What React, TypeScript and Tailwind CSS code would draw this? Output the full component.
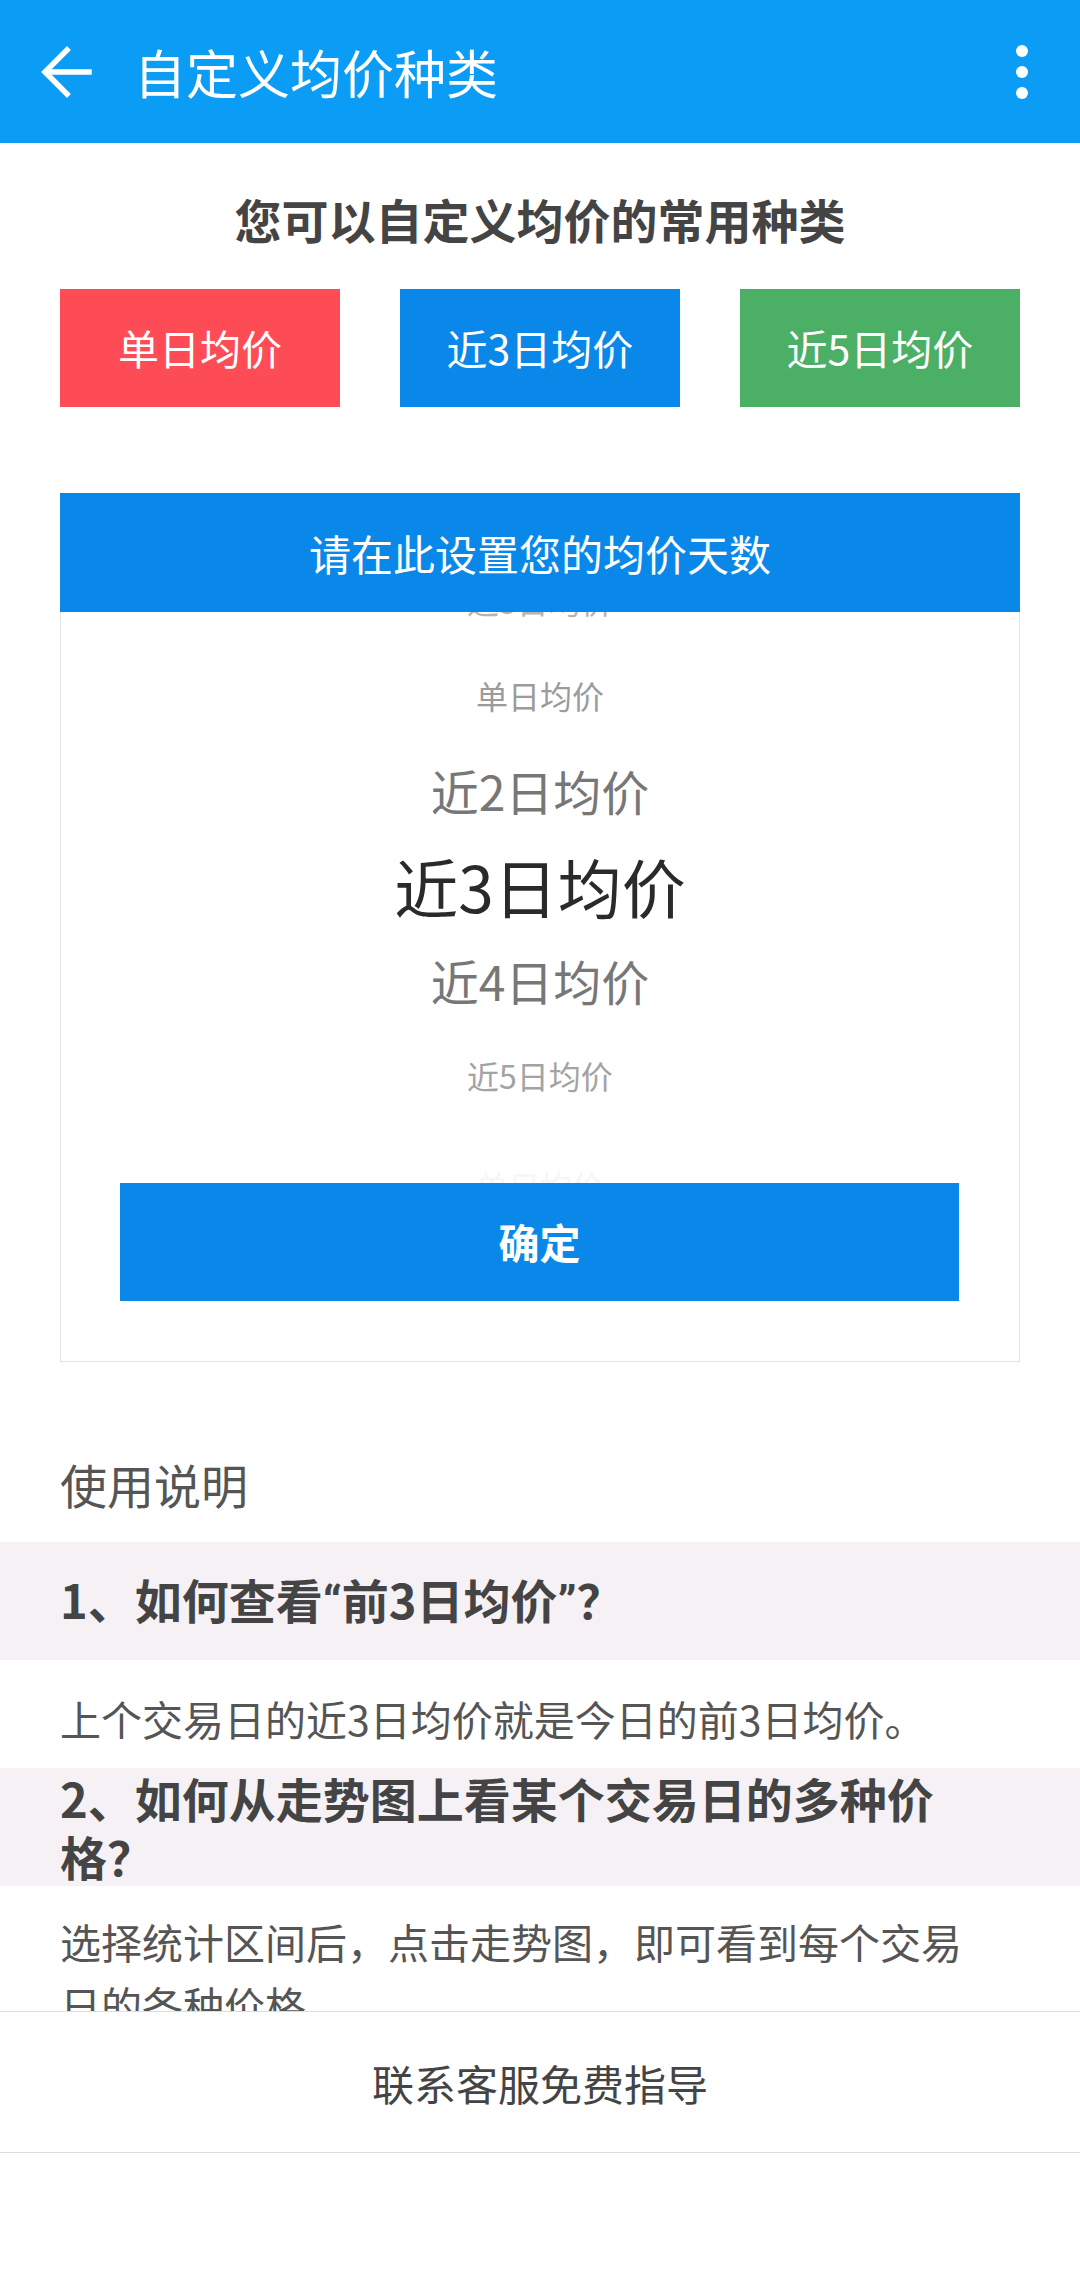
import React from 'react'

const kinds = [
  { label: '单日均价', bg: 'bg-[#fd4c55]' },
  { label: '近3日均价', bg: 'bg-[#0a88ea]' },
  { label: '近5日均价', bg: 'bg-[#4caf66]' },
]

const wheel = [
  { text: '近5日均价', cls: 'text-[32px] text-[#b5b5b5]' },
  { text: '单日均价', cls: 'text-[32px] text-[#9b9b9b]' },
  { text: '近2日均价', cls: 'text-[48px] text-[#777777]' },
  { text: '近3日均价', cls: 'text-[64px] text-[#2a2a2a]' },
  { text: '近4日均价', cls: 'text-[48px] text-[#777777]' },
  { text: '近5日均价', cls: 'text-[32px] text-[#a3a3a3]' },
  { text: '单日均价', cls: 'text-[32px] text-[#f6f6f6] pt-[30px]' },
]

function BackArrow() {
  return (
    <svg width="52" height="52" viewBox="0 0 52 52" fill="none">
      <path d="M49 26H6M27 4L5 26L27 48" stroke="white" strokeWidth="5.5" strokeLinecap="square" />
    </svg>
  )
}

export default function App() {
  return (
    <div className="flex h-[2285px] w-[1080px] flex-col bg-white font-['Noto_Sans_CJK_SC','Noto_Sans',sans-serif]">
      {/* toolbar */}
      <header className="flex h-[143px] shrink-0 items-center bg-[#0b9cf5] pl-[40px] pr-[52px]">
        <BackArrow />
        <h1 className="ml-[42px] text-[52px] leading-none text-white">自定义均价种类</h1>
        <div className="ml-auto flex flex-col gap-[9px]">
          <span className="h-[12px] w-[12px] rounded-full bg-white" />
          <span className="h-[12px] w-[12px] rounded-full bg-white" />
          <span className="h-[12px] w-[12px] rounded-full bg-white" />
        </div>
      </header>

      <main className="h-[1868px] shrink-0 overflow-hidden">
        <h2 className="pt-[40px] text-center text-[47px] font-bold leading-[72px] text-[#444444]">
          您可以自定义均价的常用种类
        </h2>

        <div className="mt-[34px] flex justify-between px-[60px]">
          {kinds.map((k) => (
            <div
              key={k.label}
              className={`${k.bg} flex h-[118px] w-[280px] items-center justify-center text-[41px] text-white`}
            >
              {k.label}
            </div>
          ))}
        </div>

        <section className="mx-[60px] mt-[86px] border border-[#e3e3e3] pb-[60px]">
          <div className="relative z-10 -mx-px -mt-px flex h-[119px] items-center justify-center bg-[#0a88ea] text-[42px] text-white">
            请在此设置您的均价天数
          </div>
          <div className="h-[571px] overflow-hidden">
            <div className="-mt-[60px]">
              {wheel.map((w, i) => (
                <div key={i} className={`flex h-[95px] items-center justify-center leading-none ${w.cls}`}>
                  {w.text}
                </div>
              ))}
            </div>
          </div>
          <button className="mx-[59px] flex h-[118px] w-[839px] items-center justify-center bg-[#0a88ea] text-[41px] font-bold text-white">
            确定
          </button>
        </section>

        <h3 className="mt-[86px] px-[60px] text-[47px] leading-[72px] text-[#555555]">使用说明</h3>

        <div className="mt-[22px] flex h-[118px] items-center bg-[#f5f1f5] px-[60px] text-[47px] font-bold text-[#444444]">
          <p>
            1、如何查看<span className="font-['Roboto',sans-serif]">“</span>前3日均价
            <span className="font-['Roboto',sans-serif]">”</span>？
          </p>
        </div>
        <div className="flex h-[108px] items-center px-[60px] pt-[10px] text-[41px] text-[#555555]">
          上个交易日的近3日均价就是今日的前3日均价。
        </div>
        <div className="flex h-[118px] items-center bg-[#f5f1f5] px-[60px] text-[47px] font-bold leading-[58px] text-[#444444]">
          <p>
            2、如何从走势图上看某个交易日的多种价
            <br />
            格？
          </p>
        </div>
        <p className="px-[60px] pt-[24px] text-[41px] leading-[63px] text-[#555555]">
          选择统计区间后，点击走势图，即可看到每个交易
          <br />
          日的各种价格
        </p>
      </main>

      <footer className="flex h-[142px] shrink-0 items-center justify-center border-y border-[#dddddd] text-[42px] text-[#444444]">
        联系客服免费指导
      </footer>
    </div>
  )
}
